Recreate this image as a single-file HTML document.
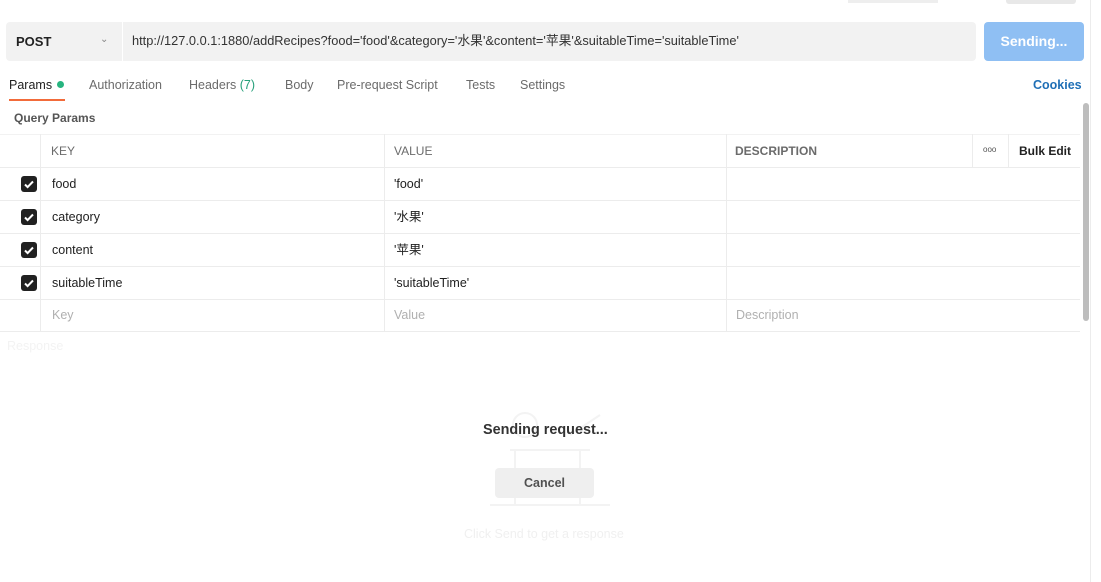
<!DOCTYPE html>
<html><head><style>
body{margin:0;width:1101px;height:582px;background:#fff;font-family:"Liberation Sans","Noto Sans CJK SC",sans-serif;position:relative;overflow:hidden;color:#212121}
.a{position:absolute}
.t{font-size:12.5px;line-height:16px}
.hl{position:absolute;left:0;width:1080px;height:1px;background:#ececec}
.vl{position:absolute;width:1px;background:#ececec}
.cb{position:absolute;left:21px;width:16px;height:16px;background:#212121;border-radius:3px}
.cb svg{position:absolute;left:2px;top:2px}
</style></head><body>
<div class="a" style="left:848px;top:0;width:90px;height:3px;background:#eee"></div>
<div class="a" style="left:1006px;top:0;width:70px;height:4px;background:#e8e8e8;border-radius:0 0 3px 3px"></div>
<div class="a" style="left:1090px;top:0;width:1px;height:582px;background:#ececec"></div>
<div class="a" style="left:6px;top:22px;width:970px;height:39px;background:#f2f2f2;border-radius:4px"></div>
<div class="a" style="left:122px;top:22px;width:1px;height:39px;background:#fff"></div>
<div class="a t" style="left:16px;top:34px;font-weight:bold;font-size:13px">POST</div>
<div class="a" style="left:100px;top:34px;font-size:10px;color:#888">&#8964;</div>
<div class="a t" style="left:132px;top:33px;font-size:12.8px;color:#333;white-space:nowrap">http://127.0.0.1:1880/addRecipes?food='food'&amp;category='水果'&amp;content='苹果'&amp;suitableTime='suitableTime'</div>
<div class="a" style="left:984px;top:22px;width:100px;height:39px;background:#8fbff3;border-radius:4px;color:#fff;font-weight:bold;font-size:14px;text-align:center;line-height:39px">Sending...</div>
<div class="a t" style="left:9px;top:77px;color:#212121">Params</div>
<div class="a" style="left:57px;top:81px;width:7px;height:7px;border-radius:50%;background:#26b47f"></div>
<div class="a" style="left:9px;top:99px;width:56px;height:2px;background:#f26b3a"></div>
<div class="a t" style="left:89px;top:77px;color:#6b6b6b">Authorization</div>
<div class="a t" style="left:189px;top:77px;color:#6b6b6b">Headers <span style="color:#26a07a">(7)</span></div>
<div class="a t" style="left:285px;top:77px;color:#6b6b6b">Body</div>
<div class="a t" style="left:337px;top:77px;color:#6b6b6b">Pre-request Script</div>
<div class="a t" style="left:466px;top:77px;color:#6b6b6b">Tests</div>
<div class="a t" style="left:520px;top:77px;color:#6b6b6b">Settings</div>
<div class="a t" style="left:1033px;top:77px;color:#1f6fb6;font-weight:bold">Cookies</div>
<div class="a t" style="left:14px;top:110px;color:#555;font-weight:bold;font-size:12px">Query Params</div>
<div class="a" style="left:1083px;top:103px;width:6px;height:218px;background:#bdbdbd;border-radius:3px"></div>
<div class="hl" style="top:134px;background:#f2f2f2"></div>
<div class="hl" style="top:167px"></div><div class="hl" style="top:200px"></div><div class="hl" style="top:233px"></div><div class="hl" style="top:266px"></div><div class="hl" style="top:299px"></div><div class="hl" style="top:331px"></div>
<div class="vl" style="left:40px;top:134px;height:197px"></div>
<div class="vl" style="left:384px;top:134px;height:197px"></div>
<div class="vl" style="left:726px;top:134px;height:197px"></div>
<div class="vl" style="left:972px;top:134px;height:33px"></div>
<div class="vl" style="left:1008px;top:134px;height:33px"></div>
<div class="a t" style="left:51px;top:143px;color:#6b6b6b;font-size:12px">KEY</div>
<div class="a t" style="left:394px;top:143px;color:#6b6b6b;font-size:12px">VALUE</div>
<div class="a t" style="left:735px;top:143px;color:#6b6b6b;font-size:12px;font-weight:bold">DESCRIPTION</div>
<div class="a" style="left:983px;top:145px;font-size:8px;color:#555">ooo</div>
<div class="a t" style="left:1019px;top:143px;font-weight:bold;font-size:12px">Bulk Edit</div>
<div class="cb" style="top:176px"><svg width="12" height="12"><path d="M2 6.5l2.6 2.6L10 3.5" stroke="#fff" stroke-width="2" fill="none"/></svg></div>
<div class="cb" style="top:209px"><svg width="12" height="12"><path d="M2 6.5l2.6 2.6L10 3.5" stroke="#fff" stroke-width="2" fill="none"/></svg></div>
<div class="cb" style="top:242px"><svg width="12" height="12"><path d="M2 6.5l2.6 2.6L10 3.5" stroke="#fff" stroke-width="2" fill="none"/></svg></div>
<div class="cb" style="top:275px"><svg width="12" height="12"><path d="M2 6.5l2.6 2.6L10 3.5" stroke="#fff" stroke-width="2" fill="none"/></svg></div>
<div class="a t" style="left:52px;top:176px">food</div><div class="a t" style="left:394px;top:176px">'food'</div>
<div class="a t" style="left:52px;top:209px">category</div><div class="a t" style="left:394px;top:209px">'水果'</div>
<div class="a t" style="left:52px;top:242px">content</div><div class="a t" style="left:394px;top:242px">'苹果'</div>
<div class="a t" style="left:52px;top:275px">suitableTime</div><div class="a t" style="left:394px;top:275px">'suitableTime'</div>
<div class="a t" style="left:52px;top:307px;color:#b0b0b0">Key</div>
<div class="a t" style="left:394px;top:307px;color:#b0b0b0">Value</div>
<div class="a t" style="left:736px;top:307px;color:#b0b0b0">Description</div>
<div class="a t" style="left:7px;top:338px;color:#f3f3f3">Response</div>
<svg class="a" style="left:470px;top:400px" width="170" height="120"><g stroke="#f3f3f3" stroke-width="2" fill="none"><circle cx="55" cy="25" r="12"/><path d="M40 50h80M45 50v55M110 50v55M20 105h120M100 35l30-20"/></g></svg>
<div class="a" style="left:483px;top:422px;font-size:14.4px;font-weight:bold;color:#333">Sending request...</div>
<div class="a" style="left:495px;top:468px;width:99px;height:30px;background:#efefef;border-radius:4px;text-align:center;line-height:30px;font-size:12.5px;font-weight:bold;color:#505050">Cancel</div>
<div class="a t" style="left:464px;top:526px;color:#f0f0f0">Click Send to get a response</div>
</body></html>
